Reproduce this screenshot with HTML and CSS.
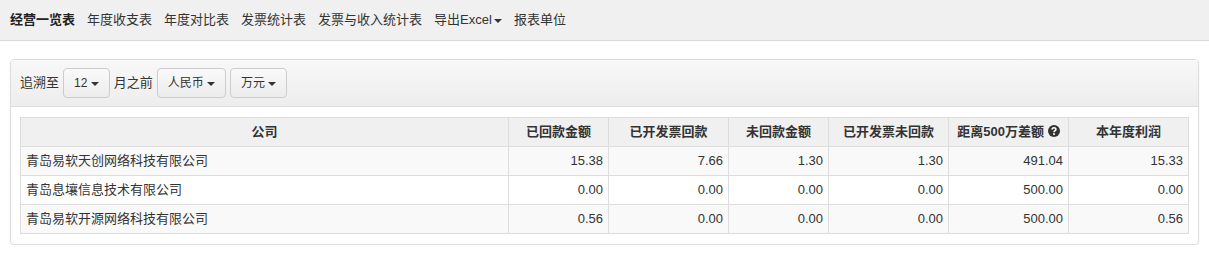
FILE: index.html
```html
<!DOCTYPE html>
<html>

<head>
    <title>经营一览表</title>
    <link rel="stylesheet" href="styles.css">
</head>

<body>

    <div class="navbar">
        <ul class="nav">
            <li class="active"><a href="#">经营一览表</a></li>
            <li><a href="#">年度收支表</a></li>
            <li><a href="#">年度对比表</a></li>
            <li><a href="#">发票统计表</a></li>
            <li><a href="#">发票与收入统计表</a></li>
            <li><a href="#">导出Excel<span class="caret nav-caret"></span></a></li>
            <li><a href="#">报表单位</a></li>
        </ul>
    </div>

    <div class="container">
        <div class="panel">
            <div class="panel-heading">
                <span>追溯至</span>
                <button type="button" class="btn">12 <span class="caret"></span></button>
                <span>月之前</span>
                <button type="button" class="btn">人民币 <span class="caret"></span></button>
                <button type="button" class="btn">万元 <span class="caret"></span></button>
            </div>
            <div class="panel-body">
                <table class="report">
                    <thead>
                        <tr>
                            <th>公司</th>
                            <th class="w100">已回款金额</th>
                            <th class="w120">已开发票回款</th>
                            <th class="w100">未回款金额</th>
                            <th class="w120">已开发票未回款</th>
                            <th class="w120">距离500万差额
                                <svg class="help" width="12" height="12" viewBox="0 0 12 12">
                                    <circle cx="6" cy="6" r="6" fill="#333" />
                                    <path d="M4.1 4.6 C4.1 2.2 7.9 2.2 7.9 4.4 C7.9 5.7 6 5.8 6 7.3" fill="none" stroke="#fff" stroke-width="1.6" />
                                    <rect x="5.1" y="8.2" width="1.8" height="1.7" fill="#fff" />
                                </svg>
                            </th>
                            <th class="w120">本年度利润</th>
                        </tr>
                    </thead>
                    <tbody>
                        <tr>
                            <td>青岛易软天创网络科技有限公司</td>
                            <td class="num">15.38</td>
                            <td class="num">7.66</td>
                            <td class="num">1.30</td>
                            <td class="num">1.30</td>
                            <td class="num">491.04</td>
                            <td class="num">15.33</td>
                        </tr>
                        <tr>
                            <td>青岛息壤信息技术有限公司</td>
                            <td class="num">0.00</td>
                            <td class="num">0.00</td>
                            <td class="num">0.00</td>
                            <td class="num">0.00</td>
                            <td class="num">500.00</td>
                            <td class="num">0.00</td>
                        </tr>
                        <tr>
                            <td>青岛易软开源网络科技有限公司</td>
                            <td class="num">0.56</td>
                            <td class="num">0.00</td>
                            <td class="num">0.00</td>
                            <td class="num">0.00</td>
                            <td class="num">500.00</td>
                            <td class="num">0.56</td>
                        </tr>
                    </tbody>
                </table>
            </div>
        </div>
    </div>

</body>

</html>
```

FILE: styles.css
```css
* {
    margin: 0;
    padding: 0;
    box-sizing: border-box;
    list-style: none;
    text-decoration: none;
}

body {
    background: #fff;
    color: #333;
    font-family: "Liberation Sans", "Noto Sans CJK SC", sans-serif;
    font-size: 13px;
    line-height: 1.42857;
}

.navbar {
    background: #f0f0f0;
    border-bottom: 1px solid #d9d9d9;
    height: 41px;
}

.nav {
    display: flex;
    gap: 12px;
    padding-left: 10px;
}

.nav li a {
    display: block;
    line-height: 40px;
    color: #333;
}

.nav li.active a {
    font-weight: bold;
    color: #222;
}

.caret {
    display: inline-block;
    width: 0;
    height: 0;
    vertical-align: middle;
    border-top: 4px solid #333;
    border-right: 4px solid transparent;
    border-left: 4px solid transparent;
}

.nav-caret {
    margin-left: 2px;
}

.container {
    padding: 18px 10px 0;
}

.panel {
    border: 1px solid #ddd;
    border-radius: 4px;
    box-shadow: 0 1px 2px rgba(0, 0, 0, 0.08);
    overflow: hidden;
}

.panel-heading {
    display: flex;
    align-items: center;
    gap: 4px;
    padding: 8px 9px;
    background: linear-gradient(to bottom, #f8f8f8, #ededed);
    border-bottom: 1px solid #ddd;
}

.btn {
    font-family: inherit;
    font-size: 12px;
    line-height: 18px;
    height: 30px;
    padding: 5px 10px;
    color: #333;
    background: linear-gradient(to bottom, #fafafa, #ececec);
    border: 1px solid #ccc;
    border-radius: 4px;
}

.panel-body {
    padding: 10px 9px;
}

.report {
    width: 100%;
    border-collapse: collapse;
    table-layout: fixed;
}

.report th,
.report td {
    border: 1px solid #ddd;
    padding: 5px;
    line-height: 18px;
    white-space: nowrap;
}

.report th {
    background: #f0f0f0;
    text-align: center;
    font-weight: bold;
}

.report .w100 {
    width: 100px;
}

.report .w120 {
    width: 120px;
}

.report tbody tr:nth-child(odd) td {
    background: #f9f9f9;
}

.report td.num {
    text-align: right;
}

.help {
    vertical-align: -1px;
}
```
